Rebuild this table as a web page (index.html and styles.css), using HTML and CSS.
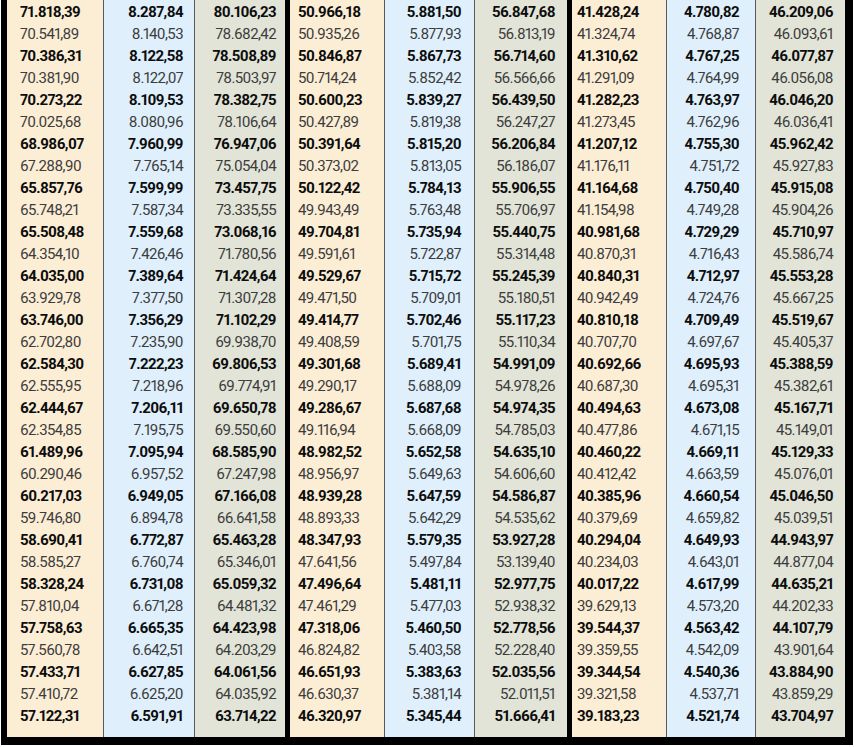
FILE: index.html
```html
<!DOCTYPE html>
<html lang="de">
<head>
<meta charset="utf-8">
<title>Tabelle</title>
<link rel="stylesheet" href="styles.css">
</head>
<body>
<div class="board">
  <div class="row b"><span>71.818,39</span><span>8.287,84</span><span>80.106,23</span><span>50.966,18</span><span>5.881,50</span><span>56.847,68</span><span>41.428,24</span><span>4.780,82</span><span>46.209,06</span></div>
  <div class="row"><span>70.541,89</span><span>8.140,53</span><span>78.682,42</span><span>50.935,26</span><span>5.877,93</span><span>56.813,19</span><span>41.324,74</span><span>4.768,87</span><span>46.093,61</span></div>
  <div class="row b"><span>70.386,31</span><span>8.122,58</span><span>78.508,89</span><span>50.846,87</span><span>5.867,73</span><span>56.714,60</span><span>41.310,62</span><span>4.767,25</span><span>46.077,87</span></div>
  <div class="row"><span>70.381,90</span><span>8.122,07</span><span>78.503,97</span><span>50.714,24</span><span>5.852,42</span><span>56.566,66</span><span>41.291,09</span><span>4.764,99</span><span>46.056,08</span></div>
  <div class="row b"><span>70.273,22</span><span>8.109,53</span><span>78.382,75</span><span>50.600,23</span><span>5.839,27</span><span>56.439,50</span><span>41.282,23</span><span>4.763,97</span><span>46.046,20</span></div>
  <div class="row"><span>70.025,68</span><span>8.080,96</span><span>78.106,64</span><span>50.427,89</span><span>5.819,38</span><span>56.247,27</span><span>41.273,45</span><span>4.762,96</span><span>46.036,41</span></div>
  <div class="row b"><span>68.986,07</span><span>7.960,99</span><span>76.947,06</span><span>50.391,64</span><span>5.815,20</span><span>56.206,84</span><span>41.207,12</span><span>4.755,30</span><span>45.962,42</span></div>
  <div class="row"><span>67.288,90</span><span>7.765,14</span><span>75.054,04</span><span>50.373,02</span><span>5.813,05</span><span>56.186,07</span><span>41.176,11</span><span>4.751,72</span><span>45.927,83</span></div>
  <div class="row b"><span>65.857,76</span><span>7.599,99</span><span>73.457,75</span><span>50.122,42</span><span>5.784,13</span><span>55.906,55</span><span>41.164,68</span><span>4.750,40</span><span>45.915,08</span></div>
  <div class="row"><span>65.748,21</span><span>7.587,34</span><span>73.335,55</span><span>49.943,49</span><span>5.763,48</span><span>55.706,97</span><span>41.154,98</span><span>4.749,28</span><span>45.904,26</span></div>
  <div class="row b"><span>65.508,48</span><span>7.559,68</span><span>73.068,16</span><span>49.704,81</span><span>5.735,94</span><span>55.440,75</span><span>40.981,68</span><span>4.729,29</span><span>45.710,97</span></div>
  <div class="row"><span>64.354,10</span><span>7.426,46</span><span>71.780,56</span><span>49.591,61</span><span>5.722,87</span><span>55.314,48</span><span>40.870,31</span><span>4.716,43</span><span>45.586,74</span></div>
  <div class="row b"><span>64.035,00</span><span>7.389,64</span><span>71.424,64</span><span>49.529,67</span><span>5.715,72</span><span>55.245,39</span><span>40.840,31</span><span>4.712,97</span><span>45.553,28</span></div>
  <div class="row"><span>63.929,78</span><span>7.377,50</span><span>71.307,28</span><span>49.471,50</span><span>5.709,01</span><span>55.180,51</span><span>40.942,49</span><span>4.724,76</span><span>45.667,25</span></div>
  <div class="row b"><span>63.746,00</span><span>7.356,29</span><span>71.102,29</span><span>49.414,77</span><span>5.702,46</span><span>55.117,23</span><span>40.810,18</span><span>4.709,49</span><span>45.519,67</span></div>
  <div class="row"><span>62.702,80</span><span>7.235,90</span><span>69.938,70</span><span>49.408,59</span><span>5.701,75</span><span>55.110,34</span><span>40.707,70</span><span>4.697,67</span><span>45.405,37</span></div>
  <div class="row b"><span>62.584,30</span><span>7.222,23</span><span>69.806,53</span><span>49.301,68</span><span>5.689,41</span><span>54.991,09</span><span>40.692,66</span><span>4.695,93</span><span>45.388,59</span></div>
  <div class="row"><span>62.555,95</span><span>7.218,96</span><span>69.774,91</span><span>49.290,17</span><span>5.688,09</span><span>54.978,26</span><span>40.687,30</span><span>4.695,31</span><span>45.382,61</span></div>
  <div class="row b"><span>62.444,67</span><span>7.206,11</span><span>69.650,78</span><span>49.286,67</span><span>5.687,68</span><span>54.974,35</span><span>40.494,63</span><span>4.673,08</span><span>45.167,71</span></div>
  <div class="row"><span>62.354,85</span><span>7.195,75</span><span>69.550,60</span><span>49.116,94</span><span>5.668,09</span><span>54.785,03</span><span>40.477,86</span><span>4.671,15</span><span>45.149,01</span></div>
  <div class="row b"><span>61.489,96</span><span>7.095,94</span><span>68.585,90</span><span>48.982,52</span><span>5.652,58</span><span>54.635,10</span><span>40.460,22</span><span>4.669,11</span><span>45.129,33</span></div>
  <div class="row"><span>60.290,46</span><span>6.957,52</span><span>67.247,98</span><span>48.956,97</span><span>5.649,63</span><span>54.606,60</span><span>40.412,42</span><span>4.663,59</span><span>45.076,01</span></div>
  <div class="row b"><span>60.217,03</span><span>6.949,05</span><span>67.166,08</span><span>48.939,28</span><span>5.647,59</span><span>54.586,87</span><span>40.385,96</span><span>4.660,54</span><span>45.046,50</span></div>
  <div class="row"><span>59.746,80</span><span>6.894,78</span><span>66.641,58</span><span>48.893,33</span><span>5.642,29</span><span>54.535,62</span><span>40.379,69</span><span>4.659,82</span><span>45.039,51</span></div>
  <div class="row b"><span>58.690,41</span><span>6.772,87</span><span>65.463,28</span><span>48.347,93</span><span>5.579,35</span><span>53.927,28</span><span>40.294,04</span><span>4.649,93</span><span>44.943,97</span></div>
  <div class="row"><span>58.585,27</span><span>6.760,74</span><span>65.346,01</span><span>47.641,56</span><span>5.497,84</span><span>53.139,40</span><span>40.234,03</span><span>4.643,01</span><span>44.877,04</span></div>
  <div class="row b"><span>58.328,24</span><span>6.731,08</span><span>65.059,32</span><span>47.496,64</span><span>5.481,11</span><span>52.977,75</span><span>40.017,22</span><span>4.617,99</span><span>44.635,21</span></div>
  <div class="row"><span>57.810,04</span><span>6.671,28</span><span>64.481,32</span><span>47.461,29</span><span>5.477,03</span><span>52.938,32</span><span>39.629,13</span><span>4.573,20</span><span>44.202,33</span></div>
  <div class="row b"><span>57.758,63</span><span>6.665,35</span><span>64.423,98</span><span>47.318,06</span><span>5.460,50</span><span>52.778,56</span><span>39.544,37</span><span>4.563,42</span><span>44.107,79</span></div>
  <div class="row"><span>57.560,78</span><span>6.642,51</span><span>64.203,29</span><span>46.824,82</span><span>5.403,58</span><span>52.228,40</span><span>39.359,55</span><span>4.542,09</span><span>43.901,64</span></div>
  <div class="row b"><span>57.433,71</span><span>6.627,85</span><span>64.061,56</span><span>46.651,93</span><span>5.383,63</span><span>52.035,56</span><span>39.344,54</span><span>4.540,36</span><span>43.884,90</span></div>
  <div class="row"><span>57.410,72</span><span>6.625,20</span><span>64.035,92</span><span>46.630,37</span><span>5.381,14</span><span>52.011,51</span><span>39.321,58</span><span>4.537,71</span><span>43.859,29</span></div>
  <div class="row b"><span>57.122,31</span><span>6.591,91</span><span>63.714,22</span><span>46.320,97</span><span>5.345,44</span><span>51.666,41</span><span>39.183,23</span><span>4.521,74</span><span>43.704,97</span></div>
</div>
</body>
</html>
```
FILE: styles.css
```css
* {
  box-sizing: border-box;
}

body {
  margin: 0;
  background: #ffffff;
  font-family: Roboto, "Liberation Sans", sans-serif;
}

.board {
  display: grid;
  grid-template-columns: 97px 91px 95px 95px 90px 97px 95px 89px 89px;
  width: 852px;
  margin-left: 1px;
  border-left: 6px solid #000;
  border-right: 8px solid #000;
  border-bottom: 8px solid #000;
  font-size: 15px;
  line-height: 22px;
  letter-spacing: -0.6px;
  font-feature-settings: "pnum";
}

.row {
  display: contents;
}

.row > span {
  display: block;
  white-space: nowrap;
  text-align: right;
  color: #3c3c3c;
  font-weight: 400;
}

.row.b > span {
  color: #0d0d0d;
  font-weight: 700;
}

.row:first-child > span {
  padding-top: 1px;
}

.row:last-child > span {
  padding-bottom: 10px;
}

/* column backgrounds */
.row > span:nth-child(3n+1) {
  background: #fcedd5;
}

.row > span:nth-child(3n+2) {
  background: #dff0fc;
}

.row > span:nth-child(3n) {
  background: #e1e4d7;
}

/* thin separators inside a group, thick between groups */
.row > span:nth-child(3n+1),
.row > span:nth-child(3n+2) {
  border-right: 1px solid #5a5a5a;
}

.row > span:nth-child(3),
.row > span:nth-child(6) {
  border-right: 5px solid #000;
}

/* per-column alignment */
.row > span:nth-child(1) { text-align: left; padding-left: 13px; }
.row > span:nth-child(2) { padding-right: 11px; }
.row > span:nth-child(3) { padding-right: 9px; }
.row > span:nth-child(4) { text-align: left; padding-left: 8px; }
.row > span:nth-child(5) { padding-right: 13px; }
.row > span:nth-child(6) { padding-right: 12px; }
.row > span:nth-child(7) { text-align: left; padding-left: 5px; }
.row > span:nth-child(8) { padding-right: 16px; }
.row > span:nth-child(9) { padding-right: 12px; }
```
